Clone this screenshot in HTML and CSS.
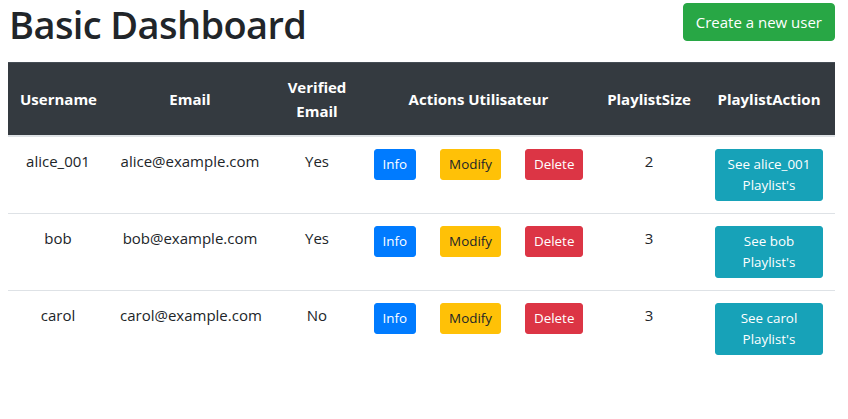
FILE: index.html
```html
<!DOCTYPE html>
<html lang="en">
<head>
<meta charset="utf-8">
<title>Basic Dashboard</title>
<link rel="stylesheet" href="styles.css">
</head>
<body>
<div class="page">
  <header class="top">
    <h1 class="title">Basic Dashboard</h1>
    <button class="btn btn-success">Create a new user</button>
  </header>
  <table class="table">
    <colgroup>
      <col class="c-user"><col class="c-email"><col class="c-ver"><col class="c-act"><col class="c-size"><col class="c-pact">
    </colgroup>
    <thead>
      <tr>
        <th>Username</th>
        <th>Email</th>
        <th>Verified Email</th>
        <th>Actions Utilisateur</th>
        <th>PlaylistSize</th>
        <th>PlaylistAction</th>
      </tr>
    </thead>
    <tbody>
      <tr>
        <td>alice_001</td>
        <td>alice@example.com</td>
        <td>Yes</td>
        <td><div class="actions"><button class="btn btn-sm btn-primary">Info</button><button class="btn btn-sm btn-warning">Modify</button><button class="btn btn-sm btn-danger">Delete</button></div></td>
        <td>2</td>
        <td><button class="btn btn-sm btn-info btn-block">See alice_001 Playlist's</button></td>
      </tr>
      <tr>
        <td>bob</td>
        <td>bob@example.com</td>
        <td>Yes</td>
        <td><div class="actions"><button class="btn btn-sm btn-primary">Info</button><button class="btn btn-sm btn-warning">Modify</button><button class="btn btn-sm btn-danger">Delete</button></div></td>
        <td>3</td>
        <td><button class="btn btn-sm btn-info btn-block">See bob Playlist's</button></td>
      </tr>
      <tr>
        <td>carol</td>
        <td>carol@example.com</td>
        <td>No</td>
        <td><div class="actions"><button class="btn btn-sm btn-primary">Info</button><button class="btn btn-sm btn-warning">Modify</button><button class="btn btn-sm btn-danger">Delete</button></div></td>
        <td>3</td>
        <td><button class="btn btn-sm btn-info btn-block">See carol Playlist's</button></td>
      </tr>
    </tbody>
  </table>
</div>
</body>
</html>
```
FILE: styles.css
```css
* { box-sizing: border-box; }
body {
  margin: 0;
  font-family: "Open Sans", "Noto Sans", "Liberation Sans", sans-serif;
  font-size: 15px;
  line-height: 24px;
  color: #212529;
  background: #fff;
}
.page {
  width: 835px;
  padding-left: 8px;
}
.top {
  display: flex;
  justify-content: space-between;
  align-items: flex-start;
  height: 62px;
}
.title {
  margin: 0;
  font-size: 38px;
  line-height: 48px;
  font-weight: 600;
  letter-spacing: -0.6px;
  padding-left: 1px;
  white-space: nowrap;
}
.btn {
  display: inline-block;
  font-family: inherit;
  font-weight: 400;
  color: #fff;
  text-align: center;
  border: 1px solid transparent;
  padding: 6px 12px;
  font-size: 15px;
  line-height: 24px;
  border-radius: 4px;
  cursor: pointer;
}
.top .btn { margin-top: 3px; }
.btn-sm {
  padding: 4px 8px;
  font-size: 13.4px;
  line-height: 21px;
  border-radius: 3px;
}
.btn-success { background: #28a745; border-color: #28a745; }
.btn-primary { background: #007bff; border-color: #007bff; }
.btn-warning { background: #ffc107; border-color: #ffc107; color: #212529; }
.btn-danger { background: #dc3545; border-color: #dc3545; }
.btn-info { background: #17a2b8; border-color: #17a2b8; }
.btn-block { display: block; width: 100%; }

.table {
  width: 827px;
  border-collapse: collapse;
  table-layout: fixed;
}
.c-user { width: 100px; }
.c-email { width: 164px; }
.c-ver { width: 90px; }
.c-act { width: 233px; }
.c-size { width: 108px; }
.c-pact { width: 132px; }

.table th, .table td {
  padding: 12px;
  text-align: center;
  vertical-align: top;
}
.table thead th {
  background: #343a40;
  color: #fff;
  font-weight: 700;
  vertical-align: middle;
  border-top: 1px solid #454d55;
  border-bottom: 2px solid #dee2e6;
}
.table tbody td {
  border-top: 1px solid #dee2e6;
}
.table tbody tr:first-child td { border-top: 0; }
.actions {
  display: flex;
  justify-content: center;
  gap: 24px;
}
```
